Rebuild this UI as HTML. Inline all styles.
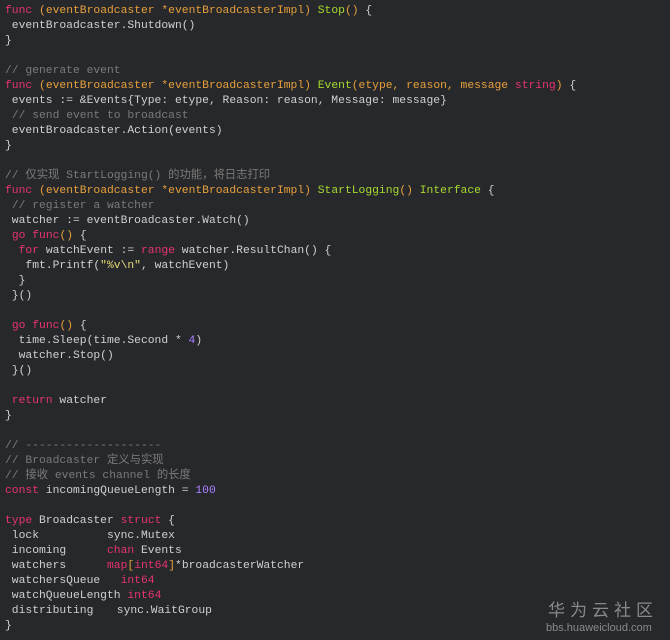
<!DOCTYPE html>
<html><head><meta charset="utf-8"><style>
html,body{margin:0;padding:0;}
body{width:670px;height:640px;background:#26282c;overflow:hidden;position:relative;}
pre{position:absolute;left:5px;top:4px;margin:0;font-family:"Liberation Mono","Noto Sans CJK SC",monospace;font-size:11.33px;line-height:15px;color:#d0d0d0;white-space:pre;}
.k{color:#e8336e}.o{color:#e8a03a}.g{color:#a6d92e}.c{color:#7b7b78}.s{color:#e6db74}.n{color:#ae81ff}
.wm{position:absolute;left:548px;top:601px;color:#8a8a8a;font-family:"Liberation Sans","Noto Sans CJK SC",sans-serif;}
.wm .a{font-size:17px;letter-spacing:5px;line-height:20px;}
.wm .b{font-size:11px;line-height:14px;margin-left:-2px;}
</style></head><body>
<pre><span class="k">func</span> <span class="o">(eventBroadcaster *eventBroadcasterImpl)</span> <span class="g">Stop</span><span class="o">()</span> {
 eventBroadcaster.Shutdown()
}

<span class="c">// generate event</span>
<span class="k">func</span> <span class="o">(eventBroadcaster *eventBroadcasterImpl)</span> <span class="g">Event</span><span class="o">(etype, reason, message </span><span class="k">string</span><span class="o">)</span> {
 events := &amp;Events{Type: etype, Reason: reason, Message: message}
 <span class="c">// send event to broadcast</span>
 eventBroadcaster.Action(events)
}

<span class="c">// 仅实现 StartLogging() 的功能，将日志打印</span>
<span class="k">func</span> <span class="o">(eventBroadcaster *eventBroadcasterImpl)</span> <span class="g">StartLogging</span><span class="o">()</span> <span class="g">Interface</span> {
 <span class="c">// register a watcher</span>
 watcher := eventBroadcaster.Watch()
 <span class="k">go</span> <span class="k">func</span><span class="o">()</span> {
  <span class="k">for</span> watchEvent := <span class="k">range</span> watcher.ResultChan() {
   fmt.Printf(<span class="s">"%v\n"</span>, watchEvent)
  }
 }()

 <span class="k">go</span> <span class="k">func</span><span class="o">()</span> {
  time.Sleep(time.Second * <span class="n">4</span>)
  watcher.Stop()
 }()

 <span class="k">return</span> watcher
}

<span class="c">// --------------------</span>
<span class="c">// Broadcaster 定义与实现</span>
<span class="c">// 接收 events channel 的长度</span>
<span class="k">const</span> incomingQueueLength = <span class="n">100</span>

<span class="k">type</span> Broadcaster <span class="k">struct</span> {
 lock          sync.Mutex
 incoming      <span class="k">chan</span> Events
 watchers      <span class="k">map</span><span class="o">[</span><span class="k">int64</span><span class="o">]</span>*broadcasterWatcher
 watchersQueue   <span class="k">int64</span>
 watchQueueLength <span class="k">int64</span>
 distributing   <span style="padding-left:3px">sync.WaitGroup</span>
}</pre>
<div class="wm"><div class="a">华为云社区</div><div class="b">bbs.huaweicloud.com</div></div>
</body></html>
